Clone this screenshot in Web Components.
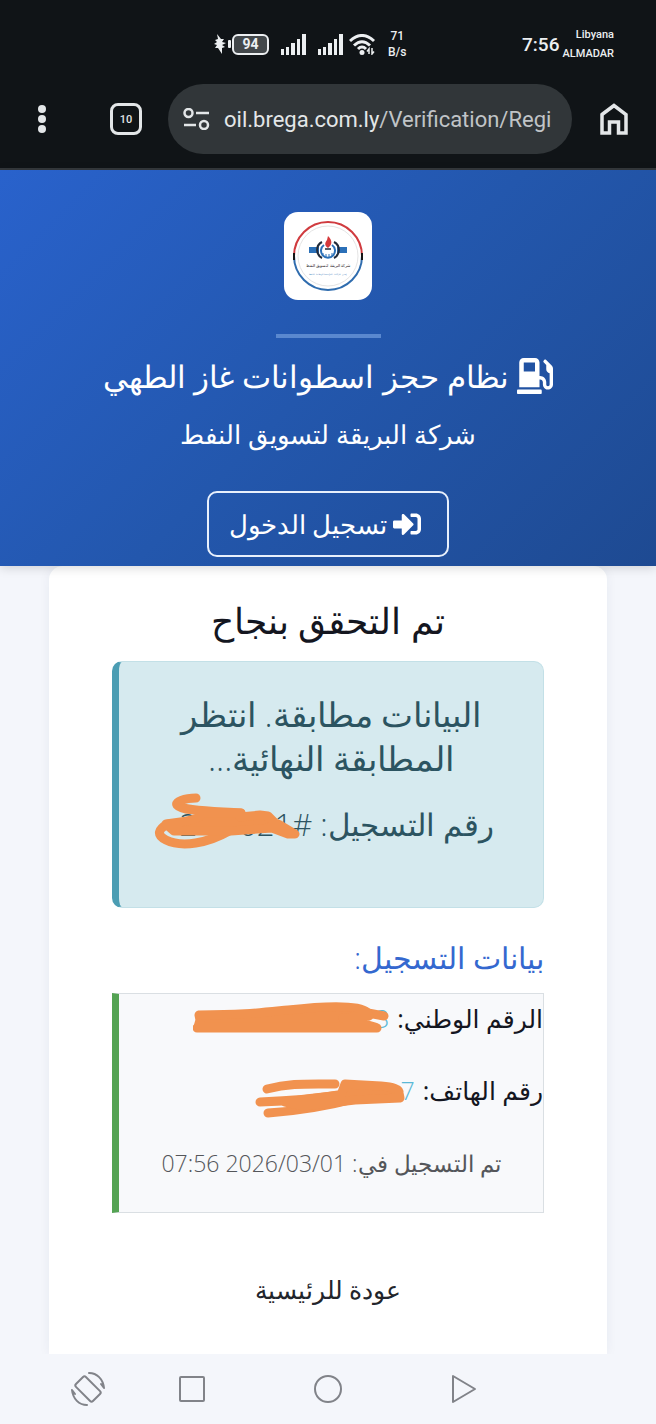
<!DOCTYPE html>
<html lang="ar" dir="rtl">
<head>
<meta charset="utf-8">
<meta name="viewport" content="width=device-width, initial-scale=1">
<title>نظام حجز اسطوانات غاز الطهي</title>
<style>
body {
    margin: 0;
    min-height: 100vh;
    display: flex;
    flex-direction: column;
    background: #f4f6fb;
    color: #14161f;
    font-family: "Open Sans", "DejaVu Sans", sans-serif;
    font-weight: 300;
}

main {
    flex: 1;
    display: flex;
    padding: 0 49px;
}
</style>
</head>
<body>

<phone-status time="7:56" battery="94"></phone-status>
<browser-bar tabs="10" host="oil.brega.com.ly" path="/Verification/Regi"></browser-bar>

<site-header>
    <span slot="title">نظام حجز اسطوانات غاز الطهي</span>
    <span slot="company">شركة البريقة لتسويق النفط</span>
    <span slot="login">تسجيل الدخول</span>
</site-header>

<main>
    <result-card>
        <span slot="title">تم التحقق بنجاح</span>
        <info-alert>
            <span slot="message">البيانات مطابقة. انتظر المطابقة النهائية...</span>
            <span slot="number">رقم التسجيل: <span dir="ltr"><hidden-value shape="number">24 &nbsp; 021</hidden-value>#</span></span>
        </info-alert>
        <registration-data>
            <span slot="heading">بيانات التسجيل:</span>
            <data-row label="الرقم الوطني:"><hidden-value shape="national">3</hidden-value></data-row>
            <data-row label="رقم الهاتف:"><hidden-value shape="phone">7</hidden-value></data-row>
            <span slot="date">تم التسجيل في: <bdi dir="ltr">07:56 2026/03/01</bdi></span>
        </registration-data>
        <a slot="back" href="#home">عودة للرئيسية</a>
    </result-card>
</main>

<phone-nav></phone-nav>

<script>
function makeTemplate(html) {
    const template = document.createElement("template");
    template.innerHTML = html;
    return template;
}

class BaseElement extends HTMLElement {
    constructor() {
        super();
        this.attachShadow({ mode: "open" });
        this.shadowRoot.append(this.constructor.template.content.cloneNode(true));
    }

    fill(selector, name) {
        this.shadowRoot.querySelector(selector).textContent = this.getAttribute(name);
    }
}

class PhoneStatus extends BaseElement {
    static template = makeTemplate(`
<style>
:host {
    display: flex;
    direction: ltr;
    justify-content: space-between;
    align-items: center;
    box-sizing: border-box;
    height: 84px;
    padding: 4px 42px 0 214px;
    background: #101417;
    color: #eceff1;
    font-family: Roboto, sans-serif;
    font-weight: 500;
}
svg {
    display: block;
}
.left, .right {
    display: flex;
    align-items: center;
}
.left {
    gap: 12px;
}
.power {
    display: flex;
    align-items: center;
    gap: 1px;
}
.battery {
    box-sizing: border-box;
    width: 37px;
    height: 21px;
    border: 2px solid #eceff1;
    border-radius: 6px;
    background: #43484b;
    font-size: 14px;
    font-weight: 700;
    line-height: 17px;
    text-align: center;
}
.wifi {
    margin-left: -6px;
}
.speed {
    font-size: 12px;
    line-height: 16px;
    text-align: center;
}
.right {
    gap: 3px;
}
.time {
    font-size: 19px;
}
.carriers {
    font-size: 11px;
    line-height: 19px;
    text-align: right;
}
</style>
<div class="left">
    <div class="power">
        <svg width="12" height="20" viewBox="0 0 12 20" fill="#eceff1"><path d="M3 0l4 5 3 0-2 3 4 1-4 2 3 2-3 1 0 6-4-6-3 0 2-3-3-1 3-2-2-2 3-1z"/></svg>
        <svg width="4" height="8" viewBox="0 0 4 8" fill="#eceff1"><rect x="1" width="3" height="8" rx="1"/></svg>
        <div class="battery"></div>
    </div>
    <svg class="signal" width="25" height="21" viewBox="0 0 25 21" fill="#eceff1"><path d="M0 15h3v6H0zM5 13h3v8H5zM10 9h4v12h-4zM16 5h3v16h-3zM21 0h4v21h-4z"/></svg>
    <svg class="signal" width="25" height="21" viewBox="0 0 25 21" fill="#eceff1"><path d="M0 15h3v6H0zM5 13h3v8H5zM10 9h4v12h-4zM16 5h3v16h-3zM21 0h4v21h-4z"/></svg>
    <svg class="wifi" width="27" height="21" viewBox="0 0 27 21" fill="none" stroke="#eceff1" stroke-width="3">
        <path d="M1 7Q13-4 25 7M5 11.500Q13 4 21 11.500M9 15q4-4 8 0"/>
        <circle cx="13" cy="18.500" r="2.500" fill="#eceff1" stroke="none"/>
        <path d="M20 20v-5l-2 2.500M23 14v6l2-2.500" stroke-width="1.500"/>
    </svg>
    <div class="speed">71<br>B/s</div>
</div>
<div class="right">
    <div class="time"></div>
    <div class="carriers">Libyana<br>ALMADAR</div>
</div>
`);

    connectedCallback() {
        this.fill(".time", "time");
        this.fill(".battery", "battery");
    }
}

class BrowserBar extends BaseElement {
    static template = makeTemplate(`
<style>
:host {
    display: flex;
    direction: ltr;
    align-items: center;
    padding: 0 27px 14px;
    background: #101417;
    border-bottom: 2px solid #34383c;
    font-family: Roboto, sans-serif;
}
button {
    padding: 0;
    border: 0;
    background: none;
    color: #e3e6e8;
    font: inherit;
    cursor: pointer;
}
svg {
    display: block;
}
.menu {
    width: 30px;
    display: grid;
    place-items: center;
}
.tabs {
    box-sizing: border-box;
    width: 32px;
    height: 32px;
    margin: 0 26px 0 53px;
    border: 3px solid #e3e6e8;
    border-radius: 8px;
    font-size: 11px;
    font-weight: 500;
}
.address {
    flex: 1;
    min-width: 0;
    display: flex;
    align-items: center;
    gap: 14px;
    height: 70px;
    padding: 0 13px 0 15px;
    border-radius: 35px;
    background: #313639;
    font-size: 22px;
    font-weight: 400;
}
.url {
    flex: 1;
    overflow: hidden;
    text-align: left;
    white-space: nowrap;
}
.path {
    color: #c0c4c7;
}
.home {
    margin-left: 27px;
}
</style>
<button class="menu" aria-label="القائمة">
    <svg width="8" height="28" viewBox="0 0 8 28" fill="#e3e6e8"><circle cx="4" cy="4" r="4"/><circle cx="4" cy="14" r="4"/><circle cx="4" cy="24" r="4"/></svg>
</button>
<button class="tabs"></button>
<button class="address">
    <svg width="27" height="22" viewBox="0 0 27 22" fill="none" stroke="#e3e6e8" stroke-width="2.500"><circle cx="5.500" cy="5" r="4"/><circle cx="21" cy="17" r="4"/><path d="M13 5h13M1 17h12"/></svg>
    <span class="url"><span class="host"></span><span class="path"></span></span>
</button>
<button class="home" aria-label="الصفحة الرئيسية">
    <svg width="30" height="34" viewBox="0 0 30 34" fill="none" stroke="#e3e6e8" stroke-width="3.500"><path d="M3 12.500 15 3.500l12 9V31h-7.500V20h-9v11H3z"/></svg>
</button>
`);

    connectedCallback() {
        this.fill(".tabs", "tabs");
        this.fill(".host", "host");
        this.fill(".path", "path");
    }
}

class BregaLogo extends BaseElement {
    static template = makeTemplate(`
<style>
:host {
    display: grid;
    place-items: center;
    width: 88px;
    height: 88px;
    border-radius: 14px;
    background: #fff;
}
text {
    font-family: "DejaVu Sans", sans-serif;
    text-anchor: middle;
    direction: rtl;
}
</style>
<svg width="70" height="70" viewBox="0 0 70 70" fill="none">
    <path d="M1 35a34 34 0 0 1 68 0" stroke="#d03b3f" stroke-width="2"/>
    <path d="M1 35a34 34 0 0 0 68 0" stroke="#2f6cae" stroke-width="2"/>
    <path d="M1 32v7M69 32v7" stroke="#151515" stroke-width="2"/>
    <circle cx="35" cy="35" r="30" stroke="#e4e4e4"/>
    <path d="M16 26h10v6H16zM44 26h10v6H44z" fill="#2b70b8"/>
    <path d="M29 21a9 9 0 0 0 0 16M41 21a9 9 0 0 1 0 16" stroke="#222b3a" stroke-width="2"/>
    <path d="M31 24a7 7 0 1 0 8 0" fill="#fff" stroke="#2b70b8" stroke-width="2"/>
    <path d="M30 32v3M33 33v3M36 33v3M39 32v3" stroke="#2b70b8"/>
    <path d="M32 28h6" stroke="#222b3a" stroke-width="1.500"/>
    <path d="M35 15c5 5 4 9 0 12-4-3-3-5-1-8z" fill="#d5393b"/>
    <text x="35" y="46" font-size="4" fill="#222">شركة البريقة لتسويق النفط</text>
    <text x="35" y="54" font-size="2" fill="#3978b5">إحدى شركات المؤسسة الوطنية للنفط</text>
</svg>
`);
}

class SiteHeader extends BaseElement {
    static template = makeTemplate(`
<style>
:host {
    position: relative;
    display: flex;
    flex-direction: column;
    align-items: center;
    padding: 42px 24px 9px;
    background: linear-gradient(135deg, #2962cc 0%, #2357ad 50%, #1e4a92 100%);
    box-shadow: 0 2px 10px rgba(0, 0, 0, 0.15);
    color: #fff;
}
svg {
    display: block;
    fill: #fff;
}
hr {
    width: 105px;
    height: 4px;
    margin: 34px 0 14px;
    border: 0;
    background: #5a88cf;
}
h1, p {
    margin: 0;
    font-weight: 300;
    text-align: center;
}
h1 {
    display: flex;
    gap: 8px;
    align-items: center;
    font-size: 31px;
    line-height: 48px;
}
p {
    margin: 14px 0 37px;
    font-size: 26px;
    line-height: 40px;
}
button {
    display: flex;
    gap: 6px;
    align-items: center;
    height: 66px;
    padding: 0 26px 0 20px;
    border: 2px solid #e8f0fc;
    border-radius: 10px;
    background: none;
    color: inherit;
    font: inherit;
    font-size: 26px;
    cursor: pointer;
}
</style>
<brega-logo></brega-logo>
<hr>
<h1>
    <svg width="36" height="36" viewBox="0 0 512 512"><path d="M336 448H16c-8.800 0-16 7.200-16 16v32c0 8.800 7.200 16 16 16h320c8.800 0 16-7.200 16-16v-32c0-8.800-7.200-16-16-16zm157.200-340.700l-81-81c-6.200-6.200-16.400-6.200-22.600 0l-11.300 11.300c-6.200 6.200-6.200 16.400 0 22.600L416 97.900V160c0 28.100 20.900 51.300 48 55.200V376c0 13.200-10.800 24-24 24s-24-10.800-24-24v-32c0-48.600-39.400-88-88-88h-8V64c0-35.300-28.700-64-64-64H96C60.700 0 32 28.700 32 64v352h288V304h8c22.100 0 40 17.900 40 40v27.800c0 37.700 27 72 64.500 75.900 43 4.300 79.500-29.500 79.500-71.700V152.600c0-17-6.800-33.300-18.800-45.300zM256 192H96V64h160v128z"/></svg>
    <slot name="title"></slot>
</h1>
<p><slot name="company"></slot></p>
<button>
    <svg width="28" height="28" viewBox="0 0 512 512"><path d="M416 448h-84c-6.600 0-12-5.400-12-12v-40c0-6.600 5.400-12 12-12h84c17.700 0 32-14.300 32-32V160c0-17.700-14.300-32-32-32h-84c-6.600 0-12-5.400-12-12V76c0-6.600 5.400-12 12-12h84c53 0 96 43 96 96v192c0 53-43 96-96 96zm-47-201L201 79c-15-15-41-4.500-41 17v96H24c-13.300 0-24 10.700-24 24v96c0 13.300 10.700 24 24 24h136v96c0 21.500 26 32 41 17l168-168c9.300-9.400 9.300-24.600 0-34z"/></svg>
    <slot name="login"></slot>
</button>
`);
}

class ResultCard extends BaseElement {
    static template = makeTemplate(`
<style>
:host {
    flex: 1;
    display: flex;
    flex-direction: column;
    box-sizing: border-box;
    min-width: 0;
    padding: 27px 63px 40px;
    border-radius: 14px 14px 0 0;
    background: #fff;
    box-shadow: 0 0 12px rgba(30, 50, 90, 0.06);
}
h2 {
    margin: 0 0 12px;
    font-size: 36px;
    font-weight: 300;
    line-height: 56px;
    text-align: center;
}
footer {
    margin-top: 56px;
    font-size: 25px;
    line-height: 40px;
    text-align: center;
}
::slotted(a) {
    color: #22252b;
    text-decoration: none;
}
</style>
<h2><slot name="title"></slot></h2>
<slot></slot>
<footer><slot name="back"></slot></footer>
`);
}

class InfoAlert extends BaseElement {
    static template = makeTemplate(`
<style>
:host {
    display: block;
    padding: 30px 24px 63px;
    border: 1px solid #c3e0e7;
    border-left: 7px solid #4b9db3;
    border-radius: 10px;
    background: #d6eaef;
    color: #2c5461;
    text-align: center;
}
p {
    margin: 0;
}
.message {
    padding: 0 24px;
    font-size: 34px;
    line-height: 44px;
}
.number {
    margin-top: 24px;
    font-size: 31px;
    line-height: 40px;
    white-space: nowrap;
}
</style>
<p class="message"><slot name="message"></slot></p>
<p class="number"><slot name="number"></slot></p>
`);
}

class RegistrationData extends BaseElement {
    static template = makeTemplate(`
<style>
:host {
    display: block;
}
h3 {
    margin: 25px 0 10px;
    color: #3468cf;
    font-size: 30px;
    font-weight: 300;
    line-height: 50px;
}
.box {
    display: flex;
    flex-direction: column;
    gap: 36px;
    padding: 6px 0 30px;
    border: 1px solid #dadfe3;
    border-left: 7px solid #54a353;
    background: #f8f9fb;
}
p {
    margin: 0;
    color: #54565a;
    font-size: 23px;
    line-height: 38px;
    text-align: center;
}
</style>
<h3><slot name="heading"></slot></h3>
<div class="box">
    <slot></slot>
    <p><slot name="date"></slot></p>
</div>
`);
}

class DataRow extends BaseElement {
    static template = makeTemplate(`
<style>
:host {
    display: flex;
    gap: 8px;
    font-size: 25px;
    line-height: 36px;
}
strong {
    font-weight: 400;
}
::slotted(*) {
    color: #5ab8d6;
}
</style>
<strong></strong>
<slot></slot>
`);

    connectedCallback() {
        this.fill("strong", "label");
    }
}

// marker strokes painted over the private values: "lines" are stroked, "area" is also filled
const markers = {
    number: {
        width: 124,
        box: "0 0 146 62",
        lines: "M42 5C30 5 21 9 23 12c5 6 30 6 64 8M14 31C4 36 2 42 12 47c16 8 42 3 63-9",
        area: "M12 31C35 28 48 26 47 20L87 20L86 24L106 22L114 23L121 30L126 32L141 41L134 41L118 35L77 38L20 38z"
    },
    national: {
        width: 192,
        box: "0 0 196 32",
        lines: "M175 11l16 3M4 26h180",
        area: "M6 13C50 13 65 11 95 8C130 4 165 2 174 10L176 14L150 16L182 25L5 25L7 18z"
    },
    phone: {
        width: 154,
        box: "0 0 152 42",
        lines: "M12 11C35 5 50 6 80 6M5 24c30-1 55-3 85-8M13 35c30-2 60-7 90-15",
        area: "M90 6L126 8C138 9 145 11 144 15L145 20L100 22L48 28L30 24L86 17z"
    }
};

class HiddenValue extends BaseElement {
    static template = makeTemplate(`
<style>
:host {
    position: relative;
    display: inline-block;
    text-align: right;
    direction: ltr;
}
svg {
    position: absolute;
    right: 0;
    top: 50%;
    transform: translateY(-50%);
    fill: none;
    stroke: #f1924f;
    stroke-width: 9px;
    stroke-linecap: round;
    stroke-linejoin: round;
}
.area {
    fill: #f1924f;
}
:host([shape="number"]) svg {
    right: -8px;
}
:host([shape="phone"]) svg {
    right: 8px;
    top: 75%;
}
</style>
<slot></slot>
<svg aria-hidden="true"><path class="lines"/><path class="area"/></svg>
`);

    connectedCallback() {
        const marker = markers[this.getAttribute("shape")];
        const svg = this.shadowRoot.querySelector("svg");
        const [, , width, height] = marker.box.split(" ");

        this.style.width = marker.width + "px";
        svg.setAttribute("viewBox", marker.box);
        svg.setAttribute("width", width);
        svg.setAttribute("height", height);
        svg.querySelector(".lines").setAttribute("d", marker.lines);
        svg.querySelector(".area").setAttribute("d", marker.area);
    }
}

class PhoneNav extends BaseElement {
    static template = makeTemplate(`
<style>
:host {
    position: relative;
    display: flex;
    direction: ltr;
    align-items: center;
    gap: 100px;
    height: 70px;
    padding: 0 70px;
    background: #f4f6fb;
}
button {
    padding: 0;
    border: 0;
    background: none;
    cursor: pointer;
}
svg {
    display: block;
    fill: none;
    stroke: #818389;
    stroke-width: 2px;
    stroke-linejoin: round;
}
.rotate {
    margin-right: -32px;
}
</style>
<button class="rotate" aria-label="تدوير">
    <svg width="36" height="36" viewBox="0 0 36 36"><rect x="6" y="11" width="24" height="14" rx="2" transform="rotate(45 18 18)"/><path d="M19 2c8 0 14 6 15 15l-3-4M17 34C9 34 3 28 2 19l3 4" stroke-linecap="round"/></svg>
</button>
<button aria-label="التطبيقات">
    <svg width="36" height="36" viewBox="0 0 36 36"><rect x="6" y="6" width="24" height="24" rx="1"/></svg>
</button>
<button aria-label="الرئيسية">
    <svg width="36" height="36" viewBox="0 0 36 36"><circle cx="18" cy="18" r="13"/></svg>
</button>
<button aria-label="رجوع">
    <svg width="36" height="36" viewBox="0 0 36 36"><path d="M7 5v26l22-13z"/></svg>
</button>
`);
}

customElements.define("phone-status", PhoneStatus);
customElements.define("browser-bar", BrowserBar);
customElements.define("brega-logo", BregaLogo);
customElements.define("site-header", SiteHeader);
customElements.define("result-card", ResultCard);
customElements.define("info-alert", InfoAlert);
customElements.define("registration-data", RegistrationData);
customElements.define("data-row", DataRow);
customElements.define("hidden-value", HiddenValue);
customElements.define("phone-nav", PhoneNav);
</script>
</body>
</html>
